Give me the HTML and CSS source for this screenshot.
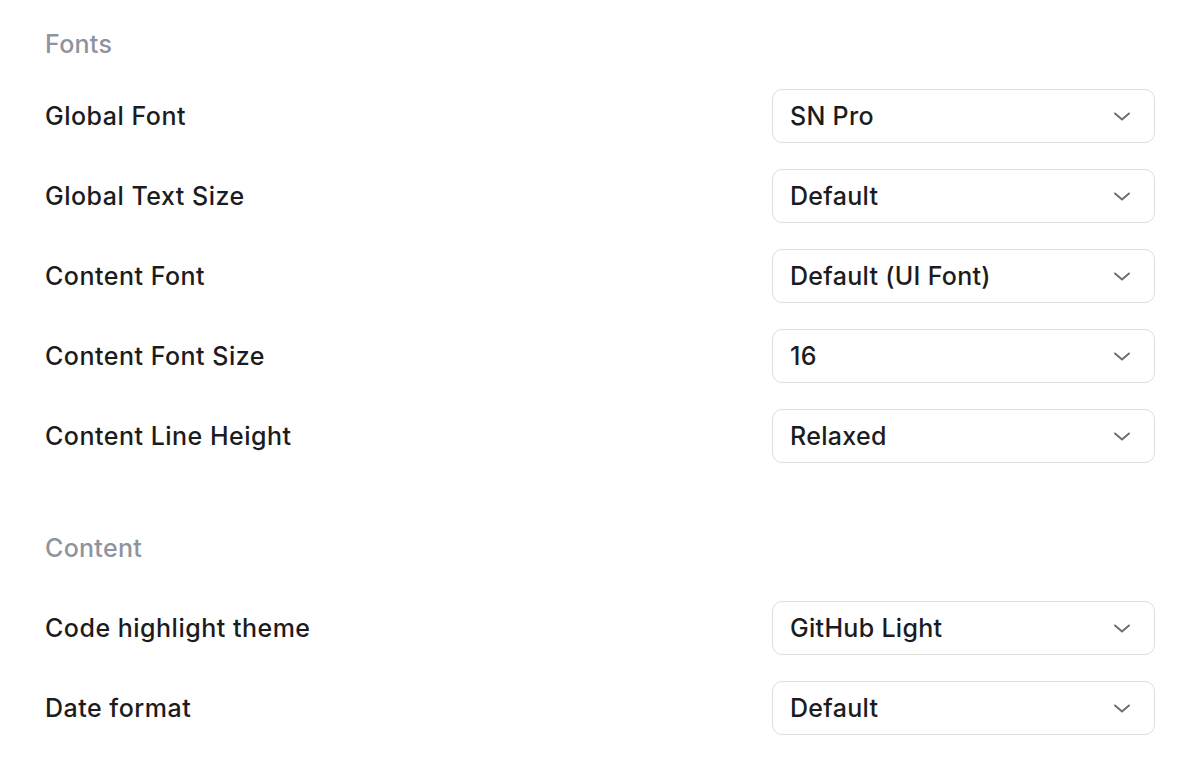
FILE: index.html
```html
<!DOCTYPE html>
<html>
<head>
<meta charset="utf-8">
<link rel="stylesheet" href="styles.css">
</head>
<body>
<main class="prefs">
  <section class="group">
    <h2 class="group-title">Fonts</h2>
    <div class="row"><span class="label">Global Font</span><div class="select"><span>SN Pro</span><svg class="chev" viewBox="0 0 18 9"><path d="M2 1.5l7 6 7-6"/></svg></div></div>
    <div class="row"><span class="label">Global Text Size</span><div class="select"><span>Default</span><svg class="chev" viewBox="0 0 18 9"><path d="M2 1.5l7 6 7-6"/></svg></div></div>
    <div class="row"><span class="label">Content Font</span><div class="select"><span>Default (UI Font)</span><svg class="chev" viewBox="0 0 18 9"><path d="M2 1.5l7 6 7-6"/></svg></div></div>
    <div class="row"><span class="label">Content Font Size</span><div class="select"><span>16</span><svg class="chev" viewBox="0 0 18 9"><path d="M2 1.5l7 6 7-6"/></svg></div></div>
    <div class="row"><span class="label">Content Line Height</span><div class="select"><span>Relaxed</span><svg class="chev" viewBox="0 0 18 9"><path d="M2 1.5l7 6 7-6"/></svg></div></div>
  </section>
  <section class="group">
    <h2 class="group-title group-title-wide">Content</h2>
    <div class="row"><span class="label">Code highlight theme</span><div class="select"><span>GitHub Light</span><svg class="chev" viewBox="0 0 18 9"><path d="M2 1.5l7 6 7-6"/></svg></div></div>
    <div class="row"><span class="label">Date format</span><div class="select"><span>Default</span><svg class="chev" viewBox="0 0 18 9"><path d="M2 1.5l7 6 7-6"/></svg></div></div>
  </section>
</main>
</body>
</html>
```
FILE: styles.css
```css
html, body {
  margin: 0;
  padding: 0;
  background: #ffffff;
}
body {
  font-family: "Inter", "Noto Sans", sans-serif;
  color: #1c1c1e;
}
.prefs {
  padding: 28px 39px 0 45px;
  display: flex;
  flex-direction: column;
  gap: 69px;
}
.group {
  display: flex;
  flex-direction: column;
  gap: 26px;
}
.group-title {
  margin: 0 0 3px 0;
  font-size: 25px;
  font-weight: 500;
  line-height: 32px;
  letter-spacing: 0.3px;
  color: #8e939d;
}
.group-title-wide {
  margin-bottom: 11px;
}
.row {
  display: flex;
  align-items: center;
  justify-content: space-between;
  height: 54px;
}
.label {
  font-size: 25px;
  font-weight: 500;
  letter-spacing: 0.5px;
}
.select {
  box-sizing: border-box;
  width: 383px;
  height: 54px;
  border: 1.5px solid #dedede;
  border-radius: 10px;
  display: flex;
  align-items: center;
  justify-content: space-between;
  padding: 0 23px 0 17px;
  font-size: 25px;
  font-weight: 500;
  letter-spacing: 0.3px;
}
.chev {
  width: 18px;
  height: 9px;
  fill: none;
  stroke: #6e6e6e;
  stroke-width: 2;
  stroke-linecap: round;
  stroke-linejoin: round;
}
```
